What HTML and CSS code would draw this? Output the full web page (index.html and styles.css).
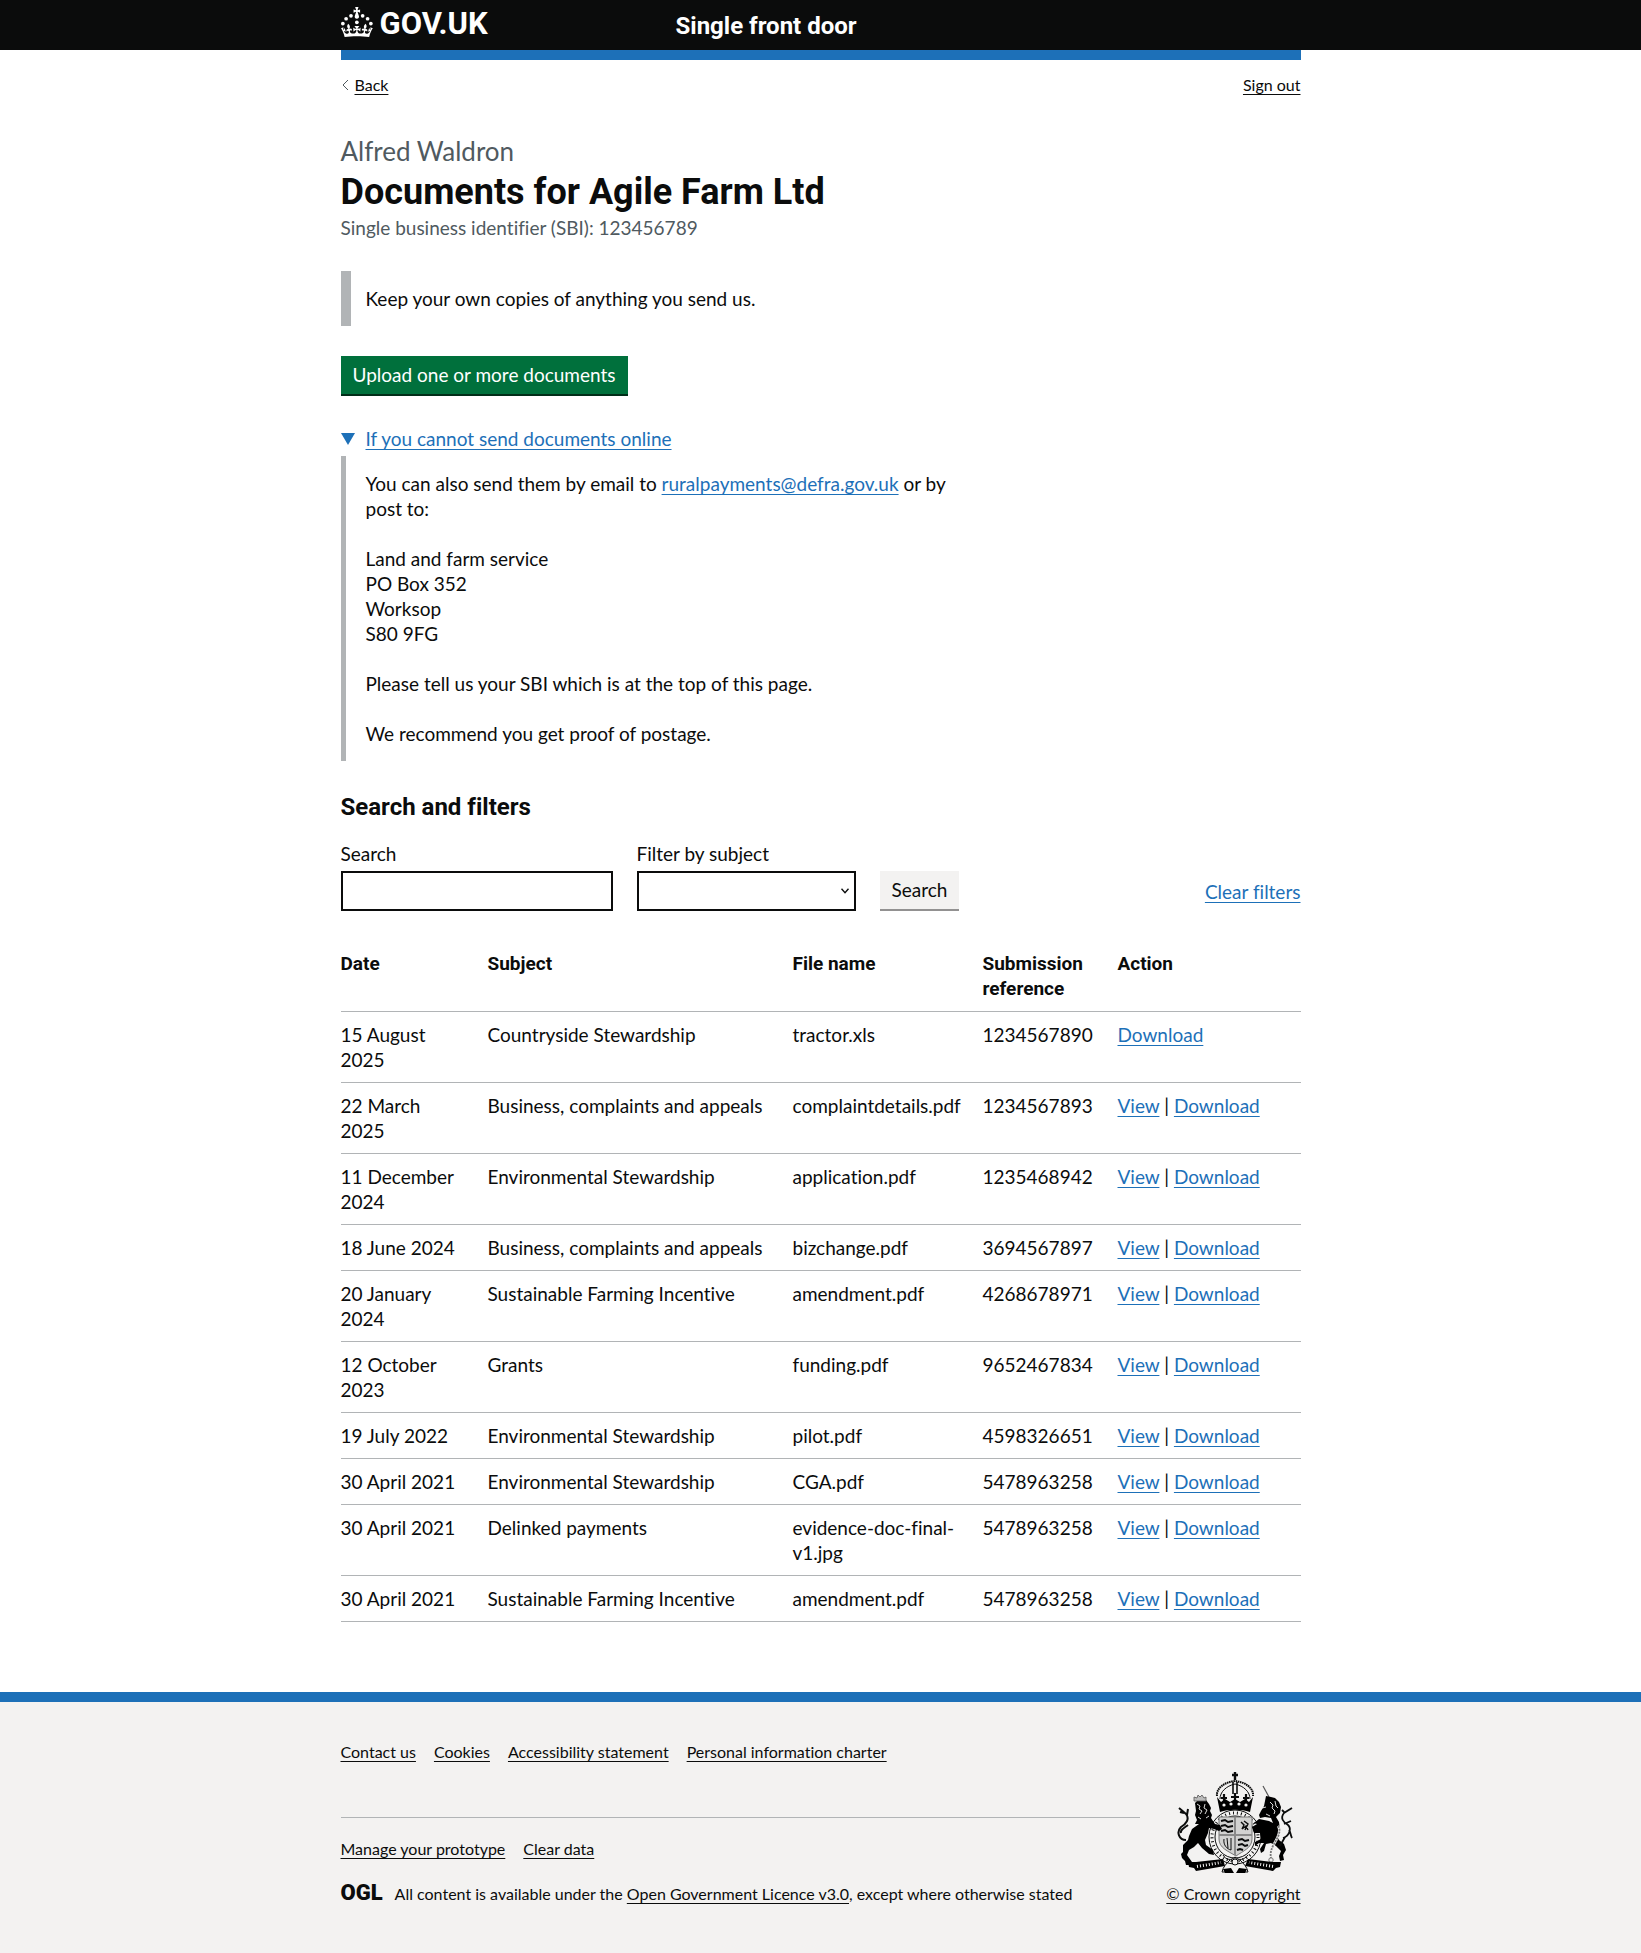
FILE: index.html
```html
<!DOCTYPE html>
<html lang="en">
<head>
<meta charset="utf-8">
<title>Documents for Agile Farm Ltd</title>
<meta name="viewport" content="width=device-width, initial-scale=1">
<link rel="stylesheet" href="styles.css">
</head>
<body>
<header class="header">
  <div class="container header-row">
    <a class="logo" href="#">
      <svg class="crown" viewBox="0 0 64 60" width="32" height="30" aria-hidden="true">
        <circle cx="20" cy="17.6" r="3.7"/><circle cx="10.2" cy="23.5" r="3.7"/><circle cx="3.7" cy="33.2" r="3.7"/><circle cx="31.7" cy="30.6" r="3.7"/><circle cx="43.3" cy="17.6" r="3.7"/><circle cx="53.2" cy="23.5" r="3.7"/><circle cx="59.7" cy="33.2" r="3.7"/>
        <path d="M33.1,9.8c.2-.1.3-.3.5-.5l4.6,2.4v-6.8l-4.6,1.5c-.1-.2-.3-.3-.5-.5l1.9-5.9h-6.7l1.9,5.9c-.2.1-.3.3-.5.5l-4.6-1.5v6.8l4.6-2.4c.1.2.3.3.5.5l-2.6,8c-.9,2.8,1.2,5.7,4.1,5.7h0c3,0,5.1-2.9,4.1-5.7l-2.6-8ZM37,37.9s-3.4,3.8-4.1,6.1c2.2,0,4.2-.5,6.4-2.8l-.7,8.5c-2-2.8-4.4-4.1-5.7-3.8.1,3.1.5,6.7,5.8,7.2,3.7.3,6.7-1.5,7-3.8.4-2.6-2-4.3-3.7-1.6-1.4-4.5,2.4-6.1,4.9-3.2-1.9-4.5-1.8-7.7,2.4-10.9,3,4,2.6,7.3-1.2,11.1,2.4-1.3,6.2,0,4,4.6-1.2-2.8-3.7-2.2-4.2.2-.3,1.7.7,3.7,3,4.2,1.9.3,4.7-.9,7-5.9-1.3,0-2.4.7-3.9,1.7l2.4-8c.6,2.3,1.4,3.7,2.2,4.5.6-1.6.5-2.8,0-5.3l5,1.8c-2.6,3.6-5.2,8.7-7.3,17.5-7.4-1.1-15.7-1.7-24.5-1.7h0c-8.8,0-17.1.6-24.5,1.7-2.1-8.9-4.7-13.9-7.3-17.5l5-1.8c-.5,2.5-.6,3.7,0,5.3.8-.8,1.6-2.3,2.2-4.5l2.4,8c-1.5-1-2.6-1.7-3.9-1.7,2.3,5,5.2,6.2,7,5.9,2.3-.4,3.3-2.4,3-4.2-.5-2.4-3-3.1-4.2-.2-2.2-4.6,1.6-6,4-4.6-3.7-3.7-4.2-7.1-1.2-11.1,4.2,3.2,4.3,6.4,2.4,10.9,2.5-2.8,6.3-1.3,4.9,3.2-1.8-2.7-4.1-1-3.7,1.6.3,2.3,3.3,4.1,7,3.8,5.4-.5,5.7-4.2,5.8-7.2-1.3-.2-3.7,1-5.7,3.8l-.7-8.5c2.2,2.3,4.2,2.7,6.4,2.8-.7-2.3-4.1-6.1-4.1-6.1h10.6Z"/>
      </svg>
      <span>GOV.UK</span>
    </a>
    <a class="service" href="#">Single front door</a>
  </div>
</header>
<div class="container">
  <div class="accent"></div>
  <nav class="page-nav" aria-label="Page">
    <a class="back" href="#"><svg width="7" height="12" viewBox="0 0 7 12" aria-hidden="true"><path d="M6 1 1 6l5 5" fill="none" stroke="#505a5f" stroke-width="1"/></svg><span>Back</span></a>
    <a href="#">Sign out</a>
  </nav>
  <main class="main">
    <p class="caption-xl">Alfred Waldron</p>
    <h1>Documents for Agile Farm Ltd</h1>
    <p class="caption">Single business identifier (SBI): 123456789</p>
    <div class="inset">Keep your own copies of anything you send us.</div>
    <button class="button" type="button">Upload one or more documents</button>
    <details class="details" open>
      <summary><svg width="14" height="12" viewBox="0 0 14 12" aria-hidden="true"><path d="M0 0h14L7 12z" fill="#1d70b8"/></svg><span>If you cannot send documents online</span></summary>
      <div class="details-text">
        <p>You can also send them by email to <a href="#">ruralpayments@defra.gov.uk</a> or by post to:</p>
        <p>Land and farm service<br>PO Box 352<br>Worksop<br>S80 9FG</p>
        <p>Please tell us your SBI which is at the top of this page.</p>
        <p>We recommend you get proof of postage.</p>
      </div>
    </details>
    <h2>Search and filters</h2>
    <form class="filters">
      <div class="field field-search"><label for="search">Search</label><input id="search" type="text"></div>
      <div class="field field-subject"><label for="subject">Filter by subject</label>
        <div class="select"><select id="subject"><option></option></select><svg width="8" height="6" viewBox="0 0 8 6" aria-hidden="true"><path d="M.5 .8 4 4.6 7.5 .8" fill="none" stroke="#0b0c0c" stroke-width="1.4"/></svg></div>
      </div>
      <button class="button button-secondary" type="button">Search</button>
      <a class="clear" href="#">Clear filters</a>
    </form>
    <table>
      <colgroup><col class="c-date"><col class="c-subject"><col class="c-file"><col class="c-ref"><col></colgroup>
      <thead><tr><th scope="col">Date</th><th scope="col">Subject</th><th scope="col">File name</th><th scope="col">Submission reference</th><th scope="col">Action</th></tr></thead>
      <tbody>
        <tr><td>15 August 2025</td><td>Countryside Stewardship</td><td>tractor.xls</td><td>1234567890</td><td><a href="#">Download</a></td></tr>
        <tr><td>22 March 2025</td><td>Business, complaints and appeals</td><td>complaintdetails.pdf</td><td>1234567893</td><td><a href="#">View</a> | <a href="#">Download</a></td></tr>
        <tr><td>11 December 2024</td><td>Environmental Stewardship</td><td>application.pdf</td><td>1235468942</td><td><a href="#">View</a> | <a href="#">Download</a></td></tr>
        <tr><td>18 June 2024</td><td>Business, complaints and appeals</td><td>bizchange.pdf</td><td>3694567897</td><td><a href="#">View</a> | <a href="#">Download</a></td></tr>
        <tr><td>20 January 2024</td><td>Sustainable Farming Incentive</td><td>amendment.pdf</td><td>4268678971</td><td><a href="#">View</a> | <a href="#">Download</a></td></tr>
        <tr><td>12 October 2023</td><td>Grants</td><td>funding.pdf</td><td>9652467834</td><td><a href="#">View</a> | <a href="#">Download</a></td></tr>
        <tr><td>19 July 2022</td><td>Environmental Stewardship</td><td>pilot.pdf</td><td>4598326651</td><td><a href="#">View</a> | <a href="#">Download</a></td></tr>
        <tr><td>30 April 2021</td><td>Environmental Stewardship</td><td>CGA.pdf</td><td>5478963258</td><td><a href="#">View</a> | <a href="#">Download</a></td></tr>
        <tr><td>30 April 2021</td><td>Delinked payments</td><td>evidence-doc-final-v1.jpg</td><td>5478963258</td><td><a href="#">View</a> | <a href="#">Download</a></td></tr>
        <tr><td>30 April 2021</td><td>Sustainable Farming Incentive</td><td>amendment.pdf</td><td>5478963258</td><td><a href="#">View</a> | <a href="#">Download</a></td></tr>
      </tbody>
    </table>
  </main>
</div>
<footer class="footer">
  <div class="container footer-row">
    <div class="footer-main">
      <ul class="links"><li><a href="#">Contact us</a></li><li><a href="#">Cookies</a></li><li><a href="#">Accessibility statement</a></li><li><a href="#">Personal information charter</a></li></ul>
      <hr>
      <ul class="links"><li><a href="#">Manage your prototype</a></li><li><a href="#">Clear data</a></li></ul>
      <div class="licence"><span class="ogl">OGL</span><span>All content is available under the <a href="#">Open Government Licence v3.0</a>, except where otherwise stated</span></div>
    </div>
    <a class="copyright" href="#">
      <svg width="116" height="102" viewBox="0 0 116 102" aria-hidden="true">
        <!-- crown -->
        <g fill="none" stroke="#0b0c0c">
          <path d="M58 0v8M55 3h6" stroke-width="2.4"/>
          <path d="M40 24c-1-8 8-14 18-15 10 1 19 7 18 15" stroke-width="2" stroke-dasharray="1.6 .6"/>
          <path d="M43 27c0-7 6-13 15-15 9 2 15 8 15 15" stroke-width="1"/>
          <path d="M56 10v12M60 10v12" stroke-width="1.6"/>
          <path d="M58 21v9M54 25h8M47 22v8M44 26h6M69 22v8M66 26h6" stroke-width="2.2"/>
        </g>
        <path d="M40 25l4 5 4-3 5 3 5-3 5 3 5-3 4 3 4-5-3 15c-9-3-21-3-30 0z"/>
        <g fill="#f3f2f1"><circle cx="47" cy="33" r="1.6"/><circle cx="54" cy="32" r="1.6"/><circle cx="62" cy="32" r="1.6"/><circle cx="69" cy="33" r="1.6"/></g>
        <!-- garter and shield -->
        <g fill="none" stroke="#0b0c0c">
          <ellipse cx="58" cy="65" rx="26" ry="27" stroke-width="1"/>
          <ellipse cx="58" cy="65" rx="23" ry="24" stroke-width="3" stroke-dasharray="1 3"/>
          <ellipse cx="58" cy="65" rx="20" ry="21" stroke-width="1"/>
        </g>
        <path d="M42 45h33v22c0 9-9 12-16 17-8-5-17-8-17-17z" fill="#d2d2d1" stroke="#777" stroke-width="1"/>
        <path d="M58 45v38M42 63h33" stroke="#8a8a8a" stroke-width="2"/>
        <g fill="none" stroke="#0b0c0c" stroke-width="2">
          <path d="M44 49l4-1 3 2 5-1M44 54l4-1 3 2 5-1M44 59l4-1 3 2 5-1M61 68l4-1 3 2 4-1M61 73l4-1 3 2 3-1M60 78l3-1 3 1"/>
          <path d="M64 50l3 3-2 4 4-3 2 4M67 49l4 3-3 6" stroke-width="1.4"/>
          <path d="M47 67c-1 6 3 10 7 11M50 66l1 10M54 66v12" stroke-width="1"/>
        </g>
        <!-- lion -->
        <path d="M18 31l3-3 4 1 4-1 3 4 2 4-1 3 2 4-1 3 4 6 5 1 2 4-3 2-5-2-5-1-1 5-3 7 1 5 7 5 1 5-5-1-7-6-4-5-4 4-5 3-2 5 5 7-2 3h-4l-1-4-3-3-1-4 2-2 0-7 5-5 1-4 3-7 7-5-4 0 2-4-2-5 1-4z"/>
        <path d="M17 29v-4l3 1 1-3 2 2 2-2 2 3 2-1v4z" fill="#bbb" stroke="#555" stroke-width=".8"/>
        <path d="M9 68c-7 0-10-8-5-13 5-3 9-8 5-13L2 36M3 40l4 1M10 43l1-6M4 61c-1-3 3-5 7-8" fill="none" stroke="#0b0c0c" stroke-width="2"/>
        <path d="M20 32l3 2-1 3 3 2-2 3M28 32l-1 4 3 2-2 4M21 45l3 2M29 46l3-2" stroke="#f3f2f1" stroke-width=".9" fill="none"/>
        <!-- unicorn -->
        <path d="M86 14l6 11" stroke="#555" stroke-width="1.2"/>
        <path d="M89 24l5 1 4 1 4 4 2 5-1 6-4 4 3 5 1 8-3 6 2 4 5 4 2 6-3 5 1 5-4 1-1-5 2-5-5-5-5-3-5 1-2 7-3 2-1-4 4-6-5 0-4 3v-4l6-3-1-6-6 0-2-6 5-3-3-1 5-4 10 2 4 2-2-5-6-1-5 1-1-3 2-4 3-5z"/>
        <path d="M106 66c6-2 9-9 5-13-5-3-8-7-4-12l8-5M108 41l-3-3M107 52l7-3M103 74l5-9M115 66c-2-4-1-5-3-8" fill="none" stroke="#0b0c0c" stroke-width="1.8"/>
        <path d="M101 54c4 5-1 13-4 18s-4 10-3 14" fill="none" stroke="#f3f2f1" stroke-width="2.6"/>
        <path d="M101 54c4 5-1 13-4 18s-4 10-3 14" fill="none" stroke="#777" stroke-width="1.8" stroke-dasharray="2 1"/>
        <circle cx="94" cy="88" r="2.2" fill="none" stroke="#777"/>
        <path d="M93 30l3 3-1 3 3 3-1 3M98 29l1 5 2 2M85 36l4-1M89 42l4 2" stroke="#f3f2f1" stroke-width=".9" fill="none"/>
        <!-- motto scroll -->
        <path d="M11 90h8l27-3 2 7-29 5-2-3-5-1z"/>
        <path d="M104 90h-8l-25-3-3 7 28 5 3-3 4-1z"/>
        <path d="M20 94.500l24-4M96 94.500l-24-4" stroke="#f3f2f1" stroke-width="3" stroke-dasharray="1 2" fill="none"/>
        <path d="M46 83c3 5 8 6 12 2 4 4 9 3 13-2M53 88c-4 4-7 7-8 12h8M63 88c4 4 7 7 8 12h-8" fill="none" stroke="#0b0c0c" stroke-width="1"/>
        <path d="M46 97l8-1 3 5h-9zM70 97l-8-1-3 5h9z"/>
        <circle cx="58" cy="90" r="3" fill="#f3f2f1" stroke="#0b0c0c"/>
      </svg>
      <span>© Crown copyright</span>
    </a>
  </div>
</footer>
</body>
</html>
```
FILE: styles.css
```css
* { box-sizing: border-box; }
body {
  margin: 0;
  background: #fff;
  color: #0b0c0c;
  font: 19px/25px Lato, Arial, sans-serif;
  font-variant-ligatures: none;
}
h1, h2, p, ul { margin: 0; padding: 0; }
h1, h2, th, .header { font-family: Roboto, Arial, sans-serif; }
a {
  color: #1d70b8;
  text-decoration: underline;
  text-decoration-thickness: 1px;
  text-underline-offset: 3px;
}
.container { max-width: 960px; margin: 0 auto; }

.header { background: #0b0c0c; }
.header-row {
  display: grid;
  grid-template-columns: 305px 1fr;
  column-gap: 30px;
  align-items: start;
  height: 50px;
}
.header a { color: #fff; text-decoration: none; font-weight: 700; }
.logo { display: flex; gap: 7px; padding-top: 7px; font-size: 31px; line-height: 34px; }
.crown { fill: #fff; }
.service { font-size: 24px; line-height: 30px; padding-top: 11px; }
.accent { height: 10px; background: #1d70b8; }

.page-nav {
  display: flex;
  justify-content: space-between;
  padding-top: 15px;
  font-size: 16px;
  line-height: 20px;
}
.page-nav a { color: #0b0c0c; }
.back { display: flex; align-items: center; gap: 6px; text-decoration: none; padding-left: 1px; }
.back span { text-decoration: underline; }

.main { padding: 39px 0 70px; }
.caption-xl { color: #505a5f; font-size: 26px; line-height: 35px; }
h1 { font-size: 36px; line-height: 46px; }
.caption { color: #505a5f; }
.inset { margin-top: 31px; padding: 15px; border-left: 10px solid #b1b4b6; }
.button {
  display: block;
  margin: 30px 0 32px;
  padding: 7px 12px;
  border: 0;
  background: #00703c;
  box-shadow: 0 2px 0 #002d18;
  color: #fff;
  font: inherit;
  line-height: 24px;
}
.button-secondary { margin: 0 0 2px; background: #f3f2f1; box-shadow: 0 2px 0 #929191; color: #0b0c0c; }

.details { max-width: 630px; }
.details summary {
  display: flex;
  align-items: center;
  gap: 11px;
  width: fit-content;
  list-style: none;
  color: #1d70b8;
}
.details summary span { text-decoration: underline; text-decoration-thickness: 1px; text-underline-offset: 3px; }
.details-text {
  display: grid;
  gap: 25px;
  margin-top: 5px;
  padding: 15px 20px;
  border-left: 5px solid #b1b4b6;
}

h2 { margin-top: 31px; font-size: 24px; line-height: 30px; }
.filters { display: flex; align-items: flex-end; gap: 24px; margin: 19px 0 30px; }
.field { display: grid; gap: 5px; }
.field-search { width: 272px; }
.field-subject { width: 219px; }
input, select {
  width: 100%;
  height: 40px;
  padding: 5px;
  border: 2px solid #0b0c0c;
  border-radius: 0;
  background: #fff;
  font: inherit;
  appearance: none;
}
.select { display: grid; align-items: center; }
.select > * { grid-area: 1 / 1; }
.select svg { justify-self: end; margin-right: 7px; pointer-events: none; }
.clear { margin-left: auto; padding-bottom: 7px; }

table { width: 100%; table-layout: fixed; border-collapse: collapse; }
.c-date { width: 147px; }
.c-subject { width: 305px; }
.c-file { width: 190px; }
.c-ref { width: 135px; }
th, td { padding: 10px 20px 10px 0; border-bottom: 1px solid #b1b4b6; text-align: left; vertical-align: top; }
td:first-child { padding-right: 30px; }
td:nth-child(2) { padding-right: 10px; }

.footer { border-top: 10px solid #1d70b8; background: #f3f2f1; font-size: 16px; line-height: 20px; }
.footer a { color: #0b0c0c; }
.footer-row { display: flex; align-items: flex-end; gap: 26px; padding: 40px 0 51px; }
.footer-main { flex: 1; }
.links { display: flex; gap: 18px; list-style: none; }
hr { margin: 55px 0 21px; border: 0; border-top: 1px solid #b1b4b6; }
.licence { display: flex; gap: 12px; margin-top: 25px; }
.ogl { font-family: Roboto, Arial, sans-serif; font-size: 22px; font-weight: 900; line-height: 18px; }
.copyright { display: flex; flex-direction: column; align-items: center; gap: 10px; }
.copyright svg { margin-left: 4px; }
```
